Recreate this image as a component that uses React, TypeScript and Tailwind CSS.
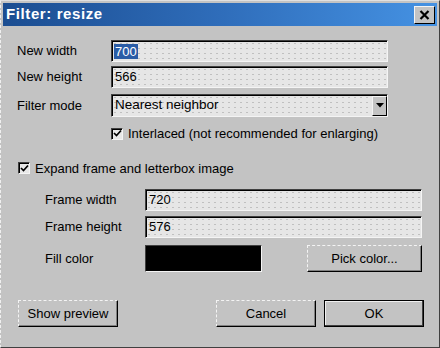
import React from "react";

const sunken =
  "border border-t-[#404040] border-l-[#404040] border-b-[#f4f4f4] border-r-[#f4f4f4] shadow-[inset_1px_1px_0_#000]";
const field =
  "bg-[#e6e6e6] bg-[radial-gradient(circle,#c0c0c0_0.6px,transparent_0.7px)] bg-[length:6px_5px]";

function TextBox({ value, selected, className = "" }: { value: string; selected?: boolean; className?: string }) {
  return (
    <div className={`h-[22px] flex items-center pl-[2px] ${sunken} ${field} ${className}`}>
      {selected ? (
        <span className="bg-[#2a5ca6] text-white px-[1px] leading-[15px]">{value}</span>
      ) : (
        <span className="px-[1px]">{value}</span>
      )}
    </div>
  );
}

function CheckBox() {
  return (
    <div className={`w-[12px] h-[12px] flex items-center justify-center bg-[#e8e8e8] ${sunken}`}>
      <svg width="9" height="9" viewBox="0 0 9 9">
        <path d="M1 4 L3.5 6.5 L8 1.5" fill="none" stroke="#000" strokeWidth="1.7" />
      </svg>
    </div>
  );
}

function Button({ label, primary, className = "" }: { label: string; primary?: boolean; className?: string }) {
  return (
    <div
      className={`h-[27px] flex items-center justify-center bg-[#c3c3c3] ${
        primary
          ? "border border-black shadow-[inset_-1px_-1px_0_#404040,inset_1px_1px_0_#f0f0f0]"
          : "border border-dashed border-t-[#f4f4f4] border-l-[#f4f4f4] border-b-black border-r-black [border-bottom-style:solid] [border-right-style:solid] shadow-[inset_-1px_-1px_0_#808080]"
      } ${className}`}
    >
      {label}
    </div>
  );
}

export default function App() {
  return (
    <div
      className="w-[440px] h-[348px] bg-[#c3c3c3] text-[13px] text-black border border-t-[#e0e0e0] border-l-[#f0f0f0] [border-left-style:dashed] border-r-[#404040] border-b-[#404040] flex flex-col"
      style={{ fontFamily: '"Liberation Sans", Arial, sans-serif' }}
    >
      {/* title bar */}
      <div className="mx-[2px] mt-[2px] h-[23px] flex items-center justify-between pl-[3px] pr-[2px] bg-[linear-gradient(90deg,#1b4d91,#2f6dba_50%,#4592e3)]">
        <span className="text-white font-bold text-[15px] tracking-[0.6px]">Filter: resize</span>
        <div className="w-[21px] h-[18px] flex items-center justify-center bg-[#c3c3c3] border border-t-[#f4f4f4] border-l-[#f4f4f4] border-b-black border-r-black">
          <svg width="11" height="10" viewBox="0 0 11 10">
            <path d="M1.5 1 L9.5 9 M9.5 1 L1.5 9" stroke="#000" strokeWidth="2.2" />
          </svg>
        </div>
      </div>

      <div className="flex flex-col pl-[16px] pr-[15px] pt-[14px]">
        <div className="grid grid-cols-[94px_277px] gap-y-[4px] items-center">
          <span>New width</span>
          <TextBox value="700" selected />
          <span>New height</span>
          <TextBox value="566" />
          <span className="mt-[2px]">Filter mode</span>
          <div className={`mt-[2px] h-[23px] flex items-center justify-between pl-[3px] ${sunken} ${field}`}>
            <span className="text-[13.5px]">Nearest neighbor</span>
            <div className="w-[15px] h-[20px] flex items-center justify-center bg-[#c3c3c3] border border-t-[#f4f4f4] border-l-[#f4f4f4] border-b-black border-r-black">
              <svg width="8" height="5" viewBox="0 0 8 5">
                <path d="M0 0 H8 L4 4.5 Z" fill="#000" />
              </svg>
            </div>
          </div>
          <span />
          <div className="flex items-center gap-[5px] mt-[3px]">
            <CheckBox />
            <span>Interlaced (not recommended for enlarging)</span>
          </div>
        </div>

        <div className="flex items-center gap-[5px] mt-[15px] ml-[1px]">
          <CheckBox />
          <span>Expand frame and letterbox image</span>
        </div>

        <div className="grid grid-cols-[100px_117px_45px_115px] ml-[28px] mt-[11px] gap-y-[5px] items-center">
          <span>Frame width</span>
          <TextBox value="720" className="col-span-3" />
          <span>Frame height</span>
          <TextBox value="576" className="col-span-3" />
          <span className="mt-[2px]">Fill color</span>
          <div className="mt-[2px] h-[27px] bg-black border border-t-[#404040] border-l-[#404040] border-b-[#f4f4f4] border-r-[#f4f4f4]" />
          <span />
          <Button label="Pick color..." className="mt-[2px]" />
        </div>

        <div className="flex items-center mt-[28px] ml-[1px]">
          <Button label="Show preview" className="w-[100px]" />
          <div className="flex-1" />
          <Button label="Cancel" className="w-[100px]" />
          <Button label="OK" primary className="w-[100px] ml-[8px]" />
        </div>
      </div>
    </div>
  );
}
